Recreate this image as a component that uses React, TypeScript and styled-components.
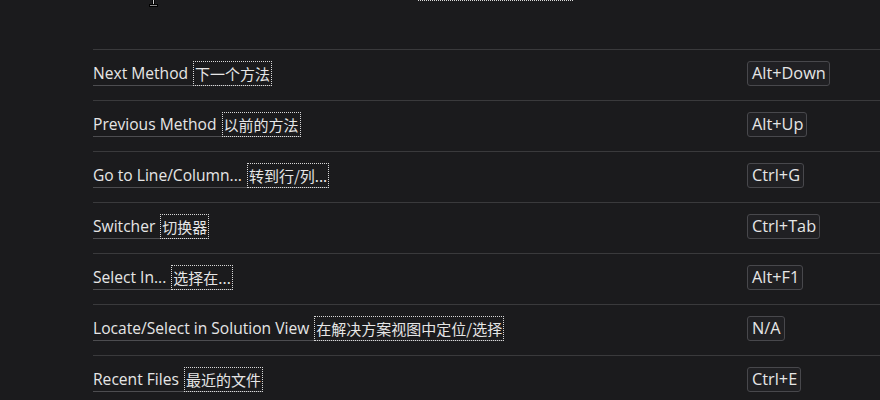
import React from 'react';
import styled, { createGlobalStyle } from 'styled-components';

const GlobalStyle = createGlobalStyle`
  html, body {
    margin: 0;
    padding: 0;
    background: #1b1b1d;
    overflow: hidden;
  }
  body {
    font-family: "Open Sans", "Noto Sans CJK SC", sans-serif;
    color: #e3e3e3;
  }
`

const Page = styled.div`
  position: relative;
  width: 880px;
  height: 400px;
  overflow: hidden;
  padding-left: 93px;
  box-sizing: border-box;
`

const Cursor = styled.svg`
  position: absolute;
  left: 149px;
  top: 0;
`

const TopTail = styled.div`
  height: 49px;
  display: flex;
  align-items: flex-start;
`

const TopBox = styled.span`
  display: block;
  margin-left: 325px;
  width: 155px;
  border-bottom: 1px dotted #d8d8d8;
`

const Table = styled.div`
  width: 900px;
`

const Row = styled.div`
  display: grid;
  grid-template-columns: 654px 1fr;
  align-items: center;
  border-top: 1px solid #3a3a3c;
  padding: 11px 0 14px;
`

const Title = styled.span`
  justify-self: start;
  display: inline-flex;
  align-items: flex-end;
  border-bottom: 1px solid #4d4d50;
  font-size: 15.6px;
  line-height: 24px;
  color: #e6e6e6;
`

const English = styled.span`
  padding-right: 5px;
`

const Translation = styled.span`
  font-family: "Noto Sans CJK SC", sans-serif;
  font-size: 15px;
  line-height: 23px;
  padding: 0 1px;
  margin-bottom: -1px;
  border: 1px dotted #d8d8d8;
`

const Kbd = styled.span`
  justify-self: start;
  font-size: 16.3px;
  line-height: 23px;
  padding: 0 3px 0 4px;
  border: 1px solid #48484c;
  border-radius: 3px;
  background: #202023;
  color: #e6e6e6;
`

const rows = [
  { en: 'Next Method', zh: '下一个方法', key: 'Alt+Down' },
  { en: 'Previous Method', zh: '以前的方法', key: 'Alt+Up' },
  { en: 'Go to Line/Column...', zh: '转到行/列...', key: 'Ctrl+G' },
  { en: 'Switcher', zh: '切换器', key: 'Ctrl+Tab' },
  { en: 'Select In...', zh: '选择在...', key: 'Alt+F1' },
  { en: 'Locate/Select in Solution View', zh: '在解决方案视图中定位/选择', key: 'N/A' },
  { en: 'Recent Files', zh: '最近的文件', key: 'Ctrl+E' },
]

export default function App() {
  return (
    <>
      <GlobalStyle />
      <Page>
        {/* text cursor left over at the top edge */}
        <Cursor width="9" height="7" viewBox="0 0 9 7">
          <rect x="3" y="0" width="3" height="5" fill="#000" />
          <rect x="4" y="0" width="1" height="5" fill="#cfcfcf" />
          <rect x="0" y="4" width="9" height="3" fill="#000" />
          <rect x="1" y="5" width="7" height="1" fill="#8a8a8a" />
        </Cursor>
        <TopTail>
          <TopBox />
        </TopTail>
        <Table>
          {rows.map((r) => (
            <Row key={r.en}>
              <Title>
                <English>{r.en}</English>
                <Translation>{r.zh}</Translation>
              </Title>
              <Kbd>{r.key}</Kbd>
            </Row>
          ))}
        </Table>
      </Page>
    </>
  )
}
